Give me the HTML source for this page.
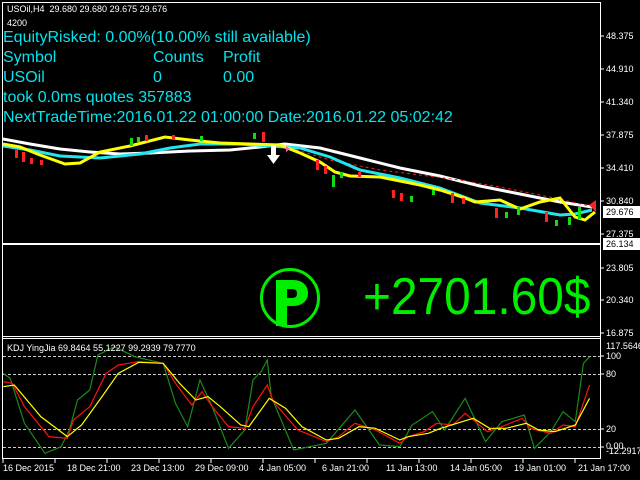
<!DOCTYPE html>
<html><head><meta charset="utf-8"><style>
body{margin:0;background:#000;width:640px;height:480px;overflow:hidden;position:relative;font-family:"Liberation Sans",sans-serif}
.t{position:absolute;white-space:nowrap}
.s{font-size:9px;color:#fff}
.c{font-size:16px;color:#00e5ee;line-height:16px}
.ax{position:absolute;left:606px;font-size:9px;color:#fff;font-family:"Liberation Sans",sans-serif}
.tm{position:absolute;top:463px;font-size:9px;color:#fff}
</style></head><body>
<svg width="640" height="480" style="position:absolute;left:0;top:0">
<g fill="none" stroke="#fff" stroke-width="1">
<path d="M2.5 2.5H600.5V458.5H2.5Z"/>
<path d="M2 336.5H600M2 338.5H600"/>
</g>
<path d="M2 244H600" stroke="#fff" stroke-width="2"/>
<g stroke="#fff">
<path d="M600 36h4M600 69h4M600 102h4M600 135h4M600 168h4M600 201h4M600 234h4M600 268h4M600 300h4M600 333h4M600 356h4M600 374h4M600 429h4M600 447h4"/>
<path d="M3 459v4M55 459v4M107 459v4M159 459v4M211 459v4M263 459v4M315 459v4M367 459v4M419 459v4M471 459v4M523 459v4M575 459v4"/>
</g>
<g stroke="#ccc" stroke-dasharray="3,2" stroke-width="1">
<path d="M3 356.5H600M3 374.5H600M3 429.5H600M3 447.5H600"/>
</g>
<g fill="none" stroke-width="3">
<polyline stroke="#fff" points="3,139 30,144 60,149 90,152 120,154 150,153 190,151 230,150 260,147 285,144 320,148 360,158 400,168 440,176 480,186 520,194 560,202 592,207"/>
<polyline stroke="#ff2020" stroke-width="1" stroke-dasharray="3,3" points="290,148 330,160 380,170 420,175 460,180 500,187 540,195 590,206"/>
<polyline stroke="#22e6ee" points="3,146 30,150 60,156 100,158 140,154 170,148 200,144 240,144 270,146 300,148 330,157 360,170 400,178 440,188 480,203 520,208 560,215 575,214 592,210"/>
<polyline stroke="#ffff00" points="3,144 20,147 40,155 65,164 80,163 100,152 130,146 165,137 190,140 220,143 250,144 280,145 300,153 320,162 335,172 350,176 380,177 420,185 440,190 465,198 475,202 500,200 520,209 540,202 560,198 575,217 585,220 595,212"/>
</g>
<g>
<rect x="15" y="150" width="3" height="8" fill="#f22"/><rect x="22" y="152" width="3" height="10" fill="#f22"/><rect x="30" y="158" width="3" height="6" fill="#f22"/><rect x="40" y="160" width="3" height="5" fill="#f22"/>
<rect x="130" y="138" width="3" height="8" fill="#1d1"/><rect x="137" y="137" width="3" height="5" fill="#1d1"/><rect x="145" y="135" width="3" height="6" fill="#f22"/><rect x="172" y="135" width="3" height="5" fill="#f22"/><rect x="200" y="136" width="3" height="5" fill="#1d1"/>
<rect x="253" y="133" width="3" height="6" fill="#1d1"/><rect x="262" y="132" width="3" height="10" fill="#f22"/>
<rect x="316" y="160" width="3" height="10" fill="#f22"/><rect x="324" y="166" width="3" height="8" fill="#f22"/><rect x="332" y="175" width="3" height="12" fill="#1d1"/><rect x="340" y="172" width="3" height="6" fill="#1d1"/><rect x="358" y="172" width="3" height="5" fill="#f22"/>
<rect x="392" y="190" width="3" height="8" fill="#f22"/><rect x="400" y="193" width="3" height="8" fill="#f22"/><rect x="410" y="196" width="3" height="6" fill="#1d1"/><rect x="432" y="190" width="3" height="5" fill="#1d1"/>
<rect x="451" y="193" width="3" height="10" fill="#f22"/><rect x="462" y="198" width="3" height="6" fill="#f22"/>
<rect x="495" y="208" width="3" height="10" fill="#f22"/><rect x="505" y="212" width="3" height="6" fill="#1d1"/><rect x="517" y="207" width="3" height="8" fill="#1d1"/><rect x="545" y="212" width="3" height="10" fill="#f22"/><rect x="555" y="220" width="3" height="6" fill="#1d1"/><rect x="568" y="217" width="3" height="8" fill="#1d1"/><rect x="578" y="207" width="3" height="12" fill="#1d1"/>
</g>
<path d="M589 205L596 200V212Z" fill="#f22"/>
<path d="M271 145h5v10h4l-6.5 9-6.5-9h4Z" fill="#fff"/>
<path d="M286 146l4 3-4 3Z" fill="#f6a"/>
<circle cx="290" cy="298" r="28.5" fill="none" stroke="#00ee00" stroke-width="3"/>
<path d="M276 280h17c10 0 15 6 15 13s-5 13-15 13h-6v20h-11Z M287 289v9h5c4 0 5-2 5-4.5s-1-4.5-5-4.5Z" fill="#00ee00" fill-rule="evenodd"/>
<rect x="603" y="206" width="37" height="12" fill="#fff"/>
<rect x="603" y="238" width="37" height="12" fill="#fff"/>
<g transform="translate(0,330) scale(0.408,0.3333)" fill="none" stroke-width="1.2">
<polyline vector-effect="non-scaling-stroke" stroke="#1a8a1a" points="8,130 25,145 60,280 110,370 150,350 170,300 190,210 220,180 240,75 280,50 330,80 400,100 430,220 460,290 490,150 520,230 560,355 600,300 620,150 640,125 655,90 665,200 720,360 800,340 870,240 930,345 980,350 1010,285 1060,245 1090,300 1140,205 1190,335 1230,275 1285,255 1310,355 1350,305 1380,245 1410,275 1430,100 1445,80"/>
<polyline vector-effect="non-scaling-stroke" stroke="#ff1010" points="8,155 30,160 60,230 120,320 165,325 180,270 220,230 260,130 290,105 340,95 400,100 430,160 470,225 495,185 520,230 560,290 600,295 620,230 655,165 670,215 730,300 800,335 830,320 870,280 920,300 980,340 1000,320 1040,305 1070,280 1110,285 1140,250 1170,280 1195,305 1230,290 1280,265 1300,295 1350,310 1380,285 1410,290 1445,165"/>
<polyline vector-effect="non-scaling-stroke" stroke="#ffff00" points="8,170 35,165 100,260 165,320 200,285 250,200 290,130 340,97 400,100 440,160 480,210 510,200 540,230 590,285 610,290 660,205 700,235 740,290 800,330 830,325 880,290 920,295 980,330 1000,320 1050,310 1080,295 1160,265 1200,295 1240,295 1290,280 1320,300 1360,305 1410,285 1445,205"/>
</g>
</svg>
<div class="t s" style="left:7px;top:4px">USOil,H4&nbsp; 29.680 29.680 29.675 29.676</div>
<div class="t s" style="left:7px;top:18px">4200</div>
<div class="t c" style="left:3px;top:30px">EquityRisked: 0.00%(10.00% still available)</div>
<div class="t c" style="left:3px;top:50px">Symbol</div><div class="t c" style="left:153px;top:50px">Counts</div><div class="t c" style="left:223px;top:50px">Profit</div>
<div class="t c" style="left:3px;top:70px">USOil</div><div class="t c" style="left:153px;top:70px">0</div><div class="t c" style="left:223px;top:70px">0.00</div>
<div class="t c" style="left:3px;top:90px">took 0.0ms quotes 357883</div>
<div class="t c" style="left:3px;top:110px">NextTradeTime:2016.01.22 01:00:00 Date:2016.01.22 05:02:42</div>
<div class="t" style="left:363px;top:271px;font-size:52px;color:#00ee00;line-height:52px;transform:scaleX(0.92);transform-origin:0 0">+2701.60$</div>
<div class="ax" style="top:31px">48.375</div><div class="ax" style="top:64px">44.910</div><div class="ax" style="top:97px">41.340</div><div class="ax" style="top:130px">37.875</div><div class="ax" style="top:163px">34.410</div><div class="ax" style="top:196px">30.840</div>
<div class="ax" style="top:207px;color:#000">29.676</div><div class="ax" style="top:229px">27.375</div><div class="ax" style="top:239px;color:#000">26.134</div>
<div class="ax" style="top:263px">23.805</div><div class="ax" style="top:295px">20.340</div><div class="ax" style="top:328px">16.875</div>
<div class="ax" style="top:341px">117.5646</div><div class="ax" style="top:351px">100</div><div class="ax" style="top:369px">80</div><div class="ax" style="top:424px">20</div><div class="ax" style="top:441px">0.00</div><div class="ax" style="top:446px">-12.2917</div>
<div class="t s" style="left:7px;top:343px">KDJ YingJia 69.8464 55.1227 99.2939 79.7770</div>
<div class="tm" style="left:3px">16 Dec 2015</div><div class="tm" style="left:67px">18 Dec 21:00</div><div class="tm" style="left:131px">23 Dec 13:00</div><div class="tm" style="left:195px">29 Dec 09:00</div><div class="tm" style="left:259px">4 Jan 05:00</div><div class="tm" style="left:322px">6 Jan 21:00</div><div class="tm" style="left:386px">11 Jan 13:00</div><div class="tm" style="left:450px">14 Jan 05:00</div><div class="tm" style="left:514px">19 Jan 01:00</div><div class="tm" style="left:578px">21 Jan 17:00</div>
</body></html>
